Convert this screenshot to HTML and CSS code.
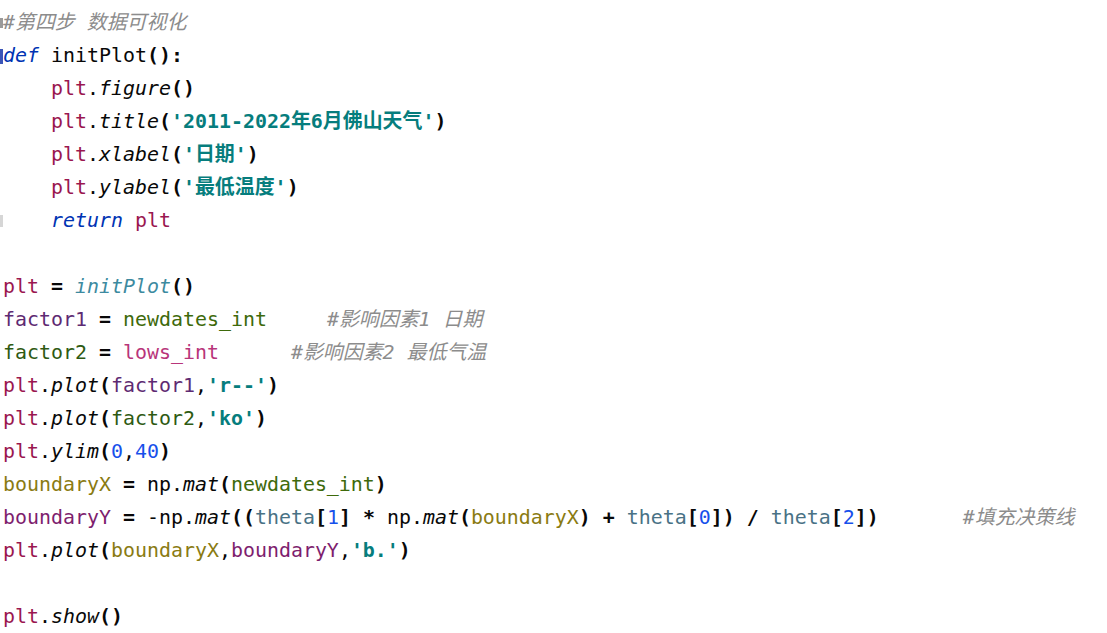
FILE: index.html
```html
<!DOCTYPE html>
<html lang="zh">
<head>
<meta charset="utf-8">
<title>code</title>
<link rel="stylesheet" href="styles.css">
</head>
<body>
<div class="editor">
<div class="line"><span class="gut"><span class="mark mark-gray"></span></span><span class="c">#第四步 数据可视化</span></div>
<div class="line"><span class="gut"><span class="mark mark-blue"></span></span><span class="kw">def</span> initPlot<span class="p">():</span></div>
<div class="line"><span class="gut"></span>    <span class="v-plt">plt</span>.<span class="fn">figure</span><span class="p">()</span></div>
<div class="line"><span class="gut"></span>    <span class="v-plt">plt</span>.<span class="fn">title</span><span class="p">(</span><span class="s">'2011-2022年6月佛山天气'</span><span class="p">)</span></div>
<div class="line"><span class="gut"></span>    <span class="v-plt">plt</span>.<span class="fn">xlabel</span><span class="p">(</span><span class="s">'日期'</span><span class="p">)</span></div>
<div class="line"><span class="gut"></span>    <span class="v-plt">plt</span>.<span class="fn">ylabel</span><span class="p">(</span><span class="s">'最低温度'</span><span class="p">)</span></div>
<div class="line"><span class="gut"><span class="mark mark-light"></span></span>    <span class="kw">return</span> <span class="v-plt">plt</span></div>
<div class="line"><span class="gut"></span></div>
<div class="line"><span class="gut"></span><span class="v-plt">plt</span> <span class="p">=</span> <span class="call">initPlot</span><span class="p">()</span></div>
<div class="line"><span class="gut"></span><span class="v-f1">factor1</span> <span class="p">=</span> <span class="v-nd">newdates_int</span>     <span class="c">#影响因素1 日期</span></div>
<div class="line"><span class="gut"></span><span class="v-f2">factor2</span> <span class="p">=</span> <span class="v-lows">lows_int</span>      <span class="c">#影响因素2 最低气温</span></div>
<div class="line"><span class="gut"></span><span class="v-plt">plt</span>.<span class="fn">plot</span><span class="p">(</span><span class="v-f1">factor1</span>,<span class="s">'r--'</span><span class="p">)</span></div>
<div class="line"><span class="gut"></span><span class="v-plt">plt</span>.<span class="fn">plot</span><span class="p">(</span><span class="v-f2">factor2</span>,<span class="s">'ko'</span><span class="p">)</span></div>
<div class="line"><span class="gut"></span><span class="v-plt">plt</span>.<span class="fn">ylim</span><span class="p">(</span><span class="n">0</span>,<span class="n">40</span><span class="p">)</span></div>
<div class="line"><span class="gut"></span><span class="v-bx">boundaryX</span> <span class="p">=</span> np.<span class="fn">mat</span><span class="p">(</span><span class="v-nd">newdates_int</span><span class="p">)</span></div>
<div class="line"><span class="gut"></span><span class="v-by">boundaryY</span> <span class="p">=</span> -np.<span class="fn">mat</span><span class="p">((</span><span class="v-th">theta</span><span class="p">[</span><span class="n">1</span><span class="p">]</span> <span class="p">*</span> np.<span class="fn">mat</span><span class="p">(</span><span class="v-bx">boundaryX</span><span class="p">)</span> <span class="p">+</span> <span class="v-th">theta</span><span class="p">[</span><span class="n">0</span><span class="p">])</span> <span class="p">/</span> <span class="v-th">theta</span><span class="p">[</span><span class="n">2</span><span class="p">])</span>       <span class="c">#填充决策线</span></div>
<div class="line"><span class="gut"></span><span class="v-plt">plt</span>.<span class="fn">plot</span><span class="p">(</span><span class="v-bx">boundaryX</span>,<span class="v-by">boundaryY</span>,<span class="s">'b.'</span><span class="p">)</span></div>
<div class="line"><span class="gut"></span></div>
<div class="line"><span class="gut"></span><span class="v-plt">plt</span>.<span class="fn">show</span><span class="p">()</span></div>
</div>
</body>
</html>
```
FILE: styles.css
```css
html, body {
  margin: 0;
  padding: 0;
  background: #ffffff;
}

.editor {
  padding-top: 6px;
  font-family: "DejaVu Sans Mono", "Noto Sans CJK SC", monospace;
  font-size: 19.93px;
  color: #080808;
}

.line {
  display: block;
  height: 33px;
  line-height: 33px;
  white-space: pre;
  overflow: hidden;
}

.gut {
  display: inline-block;
  width: 3px;
  height: 33px;
  vertical-align: top;
}

.mark {
  display: block;
  width: 3px;
}

.mark-gray {
  height: 10px;
  margin-top: 12px;
  background: #9a9a9a;
}

.mark-blue {
  height: 15px;
  margin-top: 10px;
  background: #3b55b8;
}

.mark-light {
  height: 12px;
  margin-top: 11px;
  background: #d6d6d6;
}

.c {
  color: #8c8c8c;
  font-style: italic;
}

.kw {
  color: #0033b3;
  font-style: italic;
}

.fn {
  font-style: italic;
  color: #080808;
}

.call {
  font-style: italic;
  color: #3d8aa0;
}

.p {
  color: #080808;
  font-weight: bold;
}

.s {
  color: #067d7d;
  font-weight: bold;
}

.n {
  color: #1750eb;
}

.v-plt { color: #9a1750; }
.v-f1 { color: #5e2a72; }
.v-f2 { color: #2e5a12; }
.v-nd { color: #3e6a0b; }
.v-lows { color: #b8357a; }
.v-bx { color: #8a7b12; }
.v-by { color: #7e1e6e; }
.v-th { color: #497285; }
```
